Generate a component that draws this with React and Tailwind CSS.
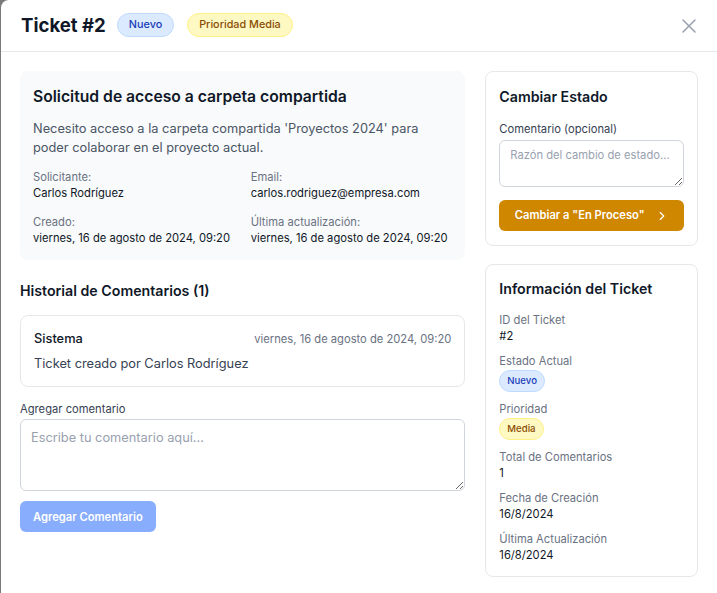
import { X, ChevronRight } from "lucide-react";

const font = { fontFamily: "Inter, 'Noto Sans', sans-serif" };

function Badge({ tone, children, small }) {
  const tones = {
    blue: "bg-blue-100 border-blue-200 text-blue-800",
    yellow: "bg-yellow-100 border-yellow-200 text-yellow-800",
  };
  return (
    <span
      className={`inline-flex items-center rounded-full border ${tones[tone]} ${
        small ? "h-[22px] px-[7px] text-[9.6px]" : "h-6 px-[11px] text-[10.8px]"
      } font-medium`}
    >
      {children}
    </span>
  );
}

function Field({ label, children }) {
  return (
    <div>
      <div className="text-[11.2px] leading-4 text-gray-500">{label}</div>
      <div className="text-[11.2px] leading-4 text-gray-900">{children}</div>
    </div>
  );
}

function BadgeField({ label, children }) {
  return (
    <div className="flex flex-col items-start">
      <div className="mb-px text-[11.2px] leading-4 text-gray-500">{label}</div>
      {children}
    </div>
  );
}

export default function App() {
  return (
    <div className="flex h-[593px] w-[717px] bg-[#7a7a7a]" style={font}>
      <div className="ml-px flex flex-1 flex-col overflow-hidden rounded-tl-lg bg-white">
        <div className="flex h-[52px] items-center justify-between border-b border-gray-200 pl-5 pr-4">
          <div className="flex items-center gap-[13px]">
            <h1 className="-mr-0.5 text-[18.6px] font-bold text-gray-900">Ticket #2</h1>
            <Badge tone="blue">Nuevo</Badge>
            <Badge tone="yellow">Prioridad Media</Badge>
          </div>
          <X className="h-6 w-6 text-gray-400" strokeWidth={1.5} />
        </div>

        <div className="grid grid-cols-3 gap-5 px-[19px] pt-[19px]">
          <div className="col-span-2">
            <div className="rounded-lg bg-gray-50 px-[13px] pt-3.5 pb-3.5">
              <h2 className="text-[15.7px] font-semibold leading-6 text-gray-900">
                Solicitud de acceso a carpeta compartida
              </h2>
              <p className="mt-2.5 text-[12.8px] leading-[19.2px] text-gray-600">
                Necesito acceso a la carpeta compartida 'Proyectos 2024' para
                poder colaborar en el proyecto actual.
              </p>
              <div className="mt-3 grid grid-cols-2 gap-x-4 gap-y-[13px]">
                <Field label="Solicitante:">Carlos Rodríguez</Field>
                <Field label="Email:">carlos.rodriguez@empresa.com</Field>
                <Field label="Creado:">viernes, 16 de agosto de 2024, 09:20</Field>
                <Field label="Última actualización:">
                  viernes, 16 de agosto de 2024, 09:20
                </Field>
              </div>
            </div>

            <h3 className="mt-[19px] text-[14.2px] font-semibold leading-6 text-gray-900">
              Historial de Comentarios (1)
            </h3>
            <div className="mt-3 rounded-lg border border-gray-200 px-[13px] pt-[13px] pb-3">
              <div className="flex items-center justify-between">
                <span className="text-[12.8px] font-medium leading-5 text-gray-900">Sistema</span>
                <span className="text-[11.2px] text-gray-500">viernes, 16 de agosto de 2024, 09:20</span>
              </div>
              <p className="mt-[5px] text-[12.8px] leading-5 text-gray-700">
                Ticket creado por Carlos Rodríguez
              </p>
            </div>

            <label className="mt-3.5 block text-[11.2px] leading-4 text-gray-700">
              Agregar comentario
            </label>
            <textarea
              className="mt-[2px] block h-[72px] w-full rounded-md border border-gray-300 px-2.5 py-2 text-[12.8px] text-gray-900 placeholder:text-gray-400"
              placeholder="Escribe tu comentario aquí..."
            />
            <button
              type="button"
              disabled
              className="mt-2.5 h-[31px] rounded-md bg-blue-600 px-[13px] text-[11.2px] font-semibold text-white opacity-50"
            >
              Agregar Comentario
            </button>
          </div>

          <div className="flex flex-col gap-[18px]">
            <div className="rounded-lg border border-gray-200 px-[13px] pt-3.5 pb-3.5">
              <h3 className="text-[14.2px] font-semibold leading-[22px] text-gray-900">
                Cambiar Estado
              </h3>
              <label className="mt-[13px] block text-[11.2px] leading-4 text-gray-700">
                Comentario (opcional)
              </label>
              <textarea
                className="mt-[3px] block h-[47px] w-full rounded-md border border-gray-300 px-2.5 py-1.5 text-[11.2px] text-gray-900 placeholder:text-gray-400"
                placeholder="Razón del cambio de estado..."
              />
              <button
                type="button"
                className="mt-[13px] flex h-[31px] w-full items-center justify-center gap-2.5 rounded-md bg-yellow-600 text-[11.2px] font-semibold text-white"
              >
                Cambiar a "En Proceso"
                <ChevronRight className="h-3.5 w-3.5" strokeWidth={2} />
              </button>
            </div>

            <div className="rounded-lg border border-gray-200 px-[13px] pt-[13px] pb-[13px]">
              <h3 className="text-[14.2px] font-semibold leading-[22px] text-gray-900">
                Información del Ticket
              </h3>
              <div className="mt-3 flex flex-col gap-[9px]">
                <Field label="ID del Ticket">#2</Field>
                <BadgeField label="Estado Actual">
                  <Badge tone="blue" small>Nuevo</Badge>
                </BadgeField>
                <BadgeField label="Prioridad">
                  <Badge tone="yellow" small>Media</Badge>
                </BadgeField>
                <Field label="Total de Comentarios">1</Field>
                <Field label="Fecha de Creación">16/8/2024</Field>
                <Field label="Última Actualización">16/8/2024</Field>
              </div>
            </div>
          </div>
        </div>
      </div>
    </div>
  );
}
